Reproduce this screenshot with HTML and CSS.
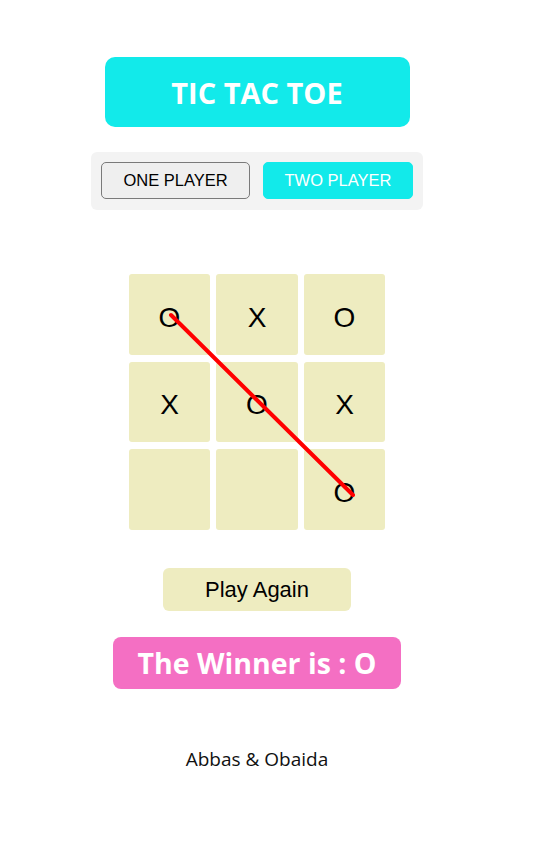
FILE: index.html
```html
<!DOCTYPE html>
<html lang="en">
<head>
<meta charset="utf-8">
<title>Tic Tac Toe</title>
<link rel="stylesheet" href="styles.css">
</head>
<body>
<main class="page">
  <h1 class="title">TIC TAC TOE</h1>
  <div class="modes">
    <button class="mode">ONE PLAYER</button>
    <button class="mode active">TWO PLAYER</button>
  </div>
  <div class="board">
    <div class="cell">O</div>
    <div class="cell">X</div>
    <div class="cell">O</div>
    <div class="cell">X</div>
    <div class="cell">O</div>
    <div class="cell">X</div>
    <div class="cell"></div>
    <div class="cell"></div>
    <div class="cell">O</div>
    <svg class="strike" width="256" height="256" viewBox="0 0 256 256">
      <line x1="42" y1="41" x2="224" y2="221" stroke="#ff0000" stroke-width="4" stroke-linecap="round"/>
    </svg>
  </div>
  <button class="again">Play Again</button>
  <div class="winner">The Winner is : O</div>
  <footer class="credit">Abbas &amp; Obaida</footer>
</main>
</body>
</html>
```
FILE: styles.css
```css
* { box-sizing: border-box; }
body {
  margin: 0;
  background: #ffffff;
  font-family: "Liberation Sans", Arial, sans-serif;
}
.page {
  width: 514px;
  display: flex;
  flex-direction: column;
  align-items: center;
}
.title {
  margin: 57px 0 0;
  width: 305px;
  height: 70px;
  border-radius: 10px;
  background: #12eaea;
  color: #ffffff;
  font-family: "Open Sans", sans-serif;
  font-weight: 700;
  font-size: 29px;
  display: flex;
  align-items: center;
  justify-content: center;
}
.modes {
  margin-top: 25px;
  width: 332px;
  height: 58px;
  padding: 10px;
  background: #f3f3f3;
  border-radius: 6px;
  display: flex;
  gap: 13px;
}
.mode {
  width: 149px;
  height: 37px;
  border: 1px solid #7a7a7a;
  border-radius: 5px;
  background: #efefef;
  color: #000000;
  font-family: "Liberation Sans", Arial, sans-serif;
  font-size: 16.5px;
  padding: 0;
}
.mode.active {
  width: 150px;
  border-color: #12eaea;
  background: #12eaea;
  color: #ffffff;
}
.board {
  position: relative;
  margin-top: 64px;
  display: grid;
  grid-template-columns: 81px 82px 81px;
  grid-template-rows: 81px 80px 81px;
  column-gap: 6px;
  row-gap: 7px;
}
.cell {
  background: #eeecc0;
  border-radius: 3px;
  display: flex;
  align-items: center;
  justify-content: center;
  padding-top: 6px;
  font-size: 28px;
  color: #000000;
}
.strike {
  position: absolute;
  left: 0;
  top: 0;
  pointer-events: none;
}
.again {
  margin-top: 38px;
  width: 188px;
  height: 43px;
  border: none;
  border-radius: 6px;
  background: #eeecc0;
  color: #000000;
  font-family: "Liberation Sans", Arial, sans-serif;
  font-size: 22px;
  padding: 0;
}
.winner {
  margin-top: 26px;
  width: 288px;
  height: 52px;
  border-radius: 8px;
  background: #f46fc3;
  color: #ffffff;
  font-family: "Open Sans", sans-serif;
  font-weight: 700;
  font-size: 28.5px;
  display: flex;
  align-items: center;
  justify-content: center;
}
.credit {
  margin-top: 57px;
  font-family: "Open Sans", sans-serif;
  font-size: 19px;
  color: #111111;
}
```
